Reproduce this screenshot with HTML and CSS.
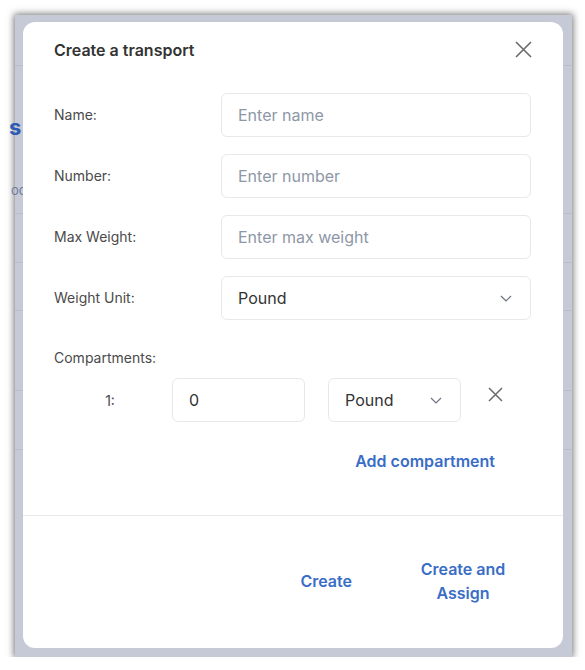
FILE: index.html
```html
<!doctype html>
<html lang="en">

<head>
	<meta charset="utf-8">
	<meta name="viewport" content="width=device-width, initial-scale=1">
	<title>Create a transport</title>
	<link rel="stylesheet" href="styles.css">
</head>

<body>

	<div class="frame">

		<div class="backdrop-page">
			<span class="bg-letter">s</span>
			<span class="bg-small">oc</span>
		</div>

		<div class="modal">

			<header class="modal-head">
				<h2>Create a transport</h2>
				<button class="icon-btn close" title="Close">
					<svg width="17" height="17" viewBox="0 0 17 17"><path d="M1 1 L16 16 M16 1 L1 16" stroke="#6b6b6b" stroke-width="1.6" fill="none"/></svg>
				</button>
			</header>

			<div class="modal-body">

				<div class="form-grid">
					<label>Name:</label>
					<input class="field" placeholder="Enter name">

					<label>Number:</label>
					<input class="field" placeholder="Enter number">

					<label>Max Weight:</label>
					<input class="field" placeholder="Enter max weight">

					<label>Weight Unit:</label>
					<div class="field select">
						<span>Pound</span>
						<svg class="chev" width="12" height="7" viewBox="0 0 12 7"><path d="M1 1 L6 6 L11 1" stroke="#6b7280" stroke-width="1.2" fill="none"/></svg>
					</div>
				</div>

				<div class="comp-label">Compartments:</div>

				<div class="comp-row">
					<span class="comp-num">1:</span>
					<div class="field small">0</div>
					<div class="field small select">
						<span>Pound</span>
						<svg class="chev" width="12" height="7" viewBox="0 0 12 7"><path d="M1 1 L6 6 L11 1" stroke="#6b7280" stroke-width="1.2" fill="none"/></svg>
					</div>
					<button class="icon-btn remove" title="Remove">
						<svg width="15" height="15" viewBox="0 0 15 15"><path d="M1 1 L14 14 M14 1 L1 14" stroke="#6b6b6b" stroke-width="1.5" fill="none"/></svg>
					</button>
				</div>

				<div class="add-row">
					<a href="#" class="link">Add compartment</a>
				</div>

			</div>

			<footer class="modal-foot">
				<a href="#" class="link btn-create">Create</a>
				<a href="#" class="link btn-assign">Create and Assign</a>
			</footer>

		</div>

	</div>

</body>

</html>
```

FILE: styles.css
```css
* {
	box-sizing: border-box;
}

:root {
	font: 100% Inter, "Noto Sans", sans-serif;
	--blue: #3a6dc6;
	--line: #e6e8ec;
}

body {
	background: #fff;
	margin: 0;
}

.frame {
	background: #c6c9d6;
	box-shadow: 0 0 7px 1px rgba(0, 0, 0, 0.55);
	height: 642px;
	margin: 15px 0 0 15px;
	padding: 7px 9px 9px 8px;
	position: relative;
	width: 557px;
}

.backdrop-page {
	background:
		linear-gradient(#b9bdcc, #b9bdcc) 0 50px / 100% 1px no-repeat,
		linear-gradient(#b9bdcc, #b9bdcc) 0 198px / 100% 1px no-repeat,
		linear-gradient(#b9bdcc, #b9bdcc) 0 247px / 100% 1px no-repeat,
		linear-gradient(#b9bdcc, #b9bdcc) 0 295px / 100% 1px no-repeat,
		linear-gradient(#b9bdcc, #b9bdcc) 0 375px / 100% 1px no-repeat,
		linear-gradient(#b9bdcc, #b9bdcc) 0 434px / 100% 1px no-repeat;
	inset: 0;
	position: absolute;
}

.bg-letter {
	color: #2c5bb5;
	font-size: 22px;
	font-weight: 700;
	left: -6px;
	position: absolute;
	top: 99px;
}

.bg-small {
	color: #6f7da0;
	font-size: 13px;
	left: -4px;
	position: absolute;
	top: 167px;
}

.modal {
	background: #fff;
	border-radius: 12px;
	display: flex;
	flex-direction: column;
	height: 626px;
	position: relative;
	width: 540px;
}

.modal-head {
	align-items: center;
	display: flex;
	justify-content: space-between;
	padding: 17px 31px 0 31px;
}

h2 {
	color: #333;
	font-size: 16px;
	font-weight: 600;
	line-height: 22px;
	margin: 0;
}

.icon-btn {
	background: none;
	border: none;
	cursor: pointer;
	display: flex;
	padding: 0;
}

.close {
	margin-top: -1px;
}

.modal-body {
	padding: 32px 32px 0 31px;
}

.form-grid {
	align-items: center;
	display: grid;
	gap: 17px 0;
	grid-template-columns: 167px 1fr;
}

label,
.comp-label {
	color: #4a4a4a;
	font-size: 14px;
	line-height: 18px;
}

.field {
	align-items: center;
	background: #fff;
	border: 1px solid var(--line);
	border-radius: 6px;
	color: #333;
	display: flex;
	font: inherit;
	font-size: 16px;
	height: 44px;
	outline: none;
	padding: 0 16px;
	width: 100%;
}

.field::placeholder {
	color: #8e97a6;
}

.select {
	justify-content: space-between;
	padding-right: 18px;
}

.comp-label {
	margin-top: 29px;
}

.comp-row {
	align-items: center;
	display: flex;
	margin-top: 11px;
}

.comp-num {
	color: #4a4a4a;
	font-size: 14px;
	margin-right: 6px;
	text-align: center;
	width: 112px;
}

.field.small {
	width: 133px;
}

.field.small + .field.small {
	margin-left: 23px;
}

.remove {
	margin: -12px 0 0 27px;
}

.add-row {
	display: flex;
	justify-content: flex-end;
	margin-top: 27px;
	padding-right: 36px;
}

.link {
	color: var(--blue);
	font-size: 16px;
	font-weight: 600;
	line-height: 24px;
	text-decoration: none;
}

.modal-foot {
	align-items: center;
	border-top: 1px solid var(--line);
	display: flex;
	flex: 1;
	justify-content: flex-end;
	margin-top: 42px;
	padding: 0 55px 2px 0;
}

.btn-create {
	margin-right: 66px;
}

.btn-assign {
	text-align: center;
	width: 90px;
}
```
